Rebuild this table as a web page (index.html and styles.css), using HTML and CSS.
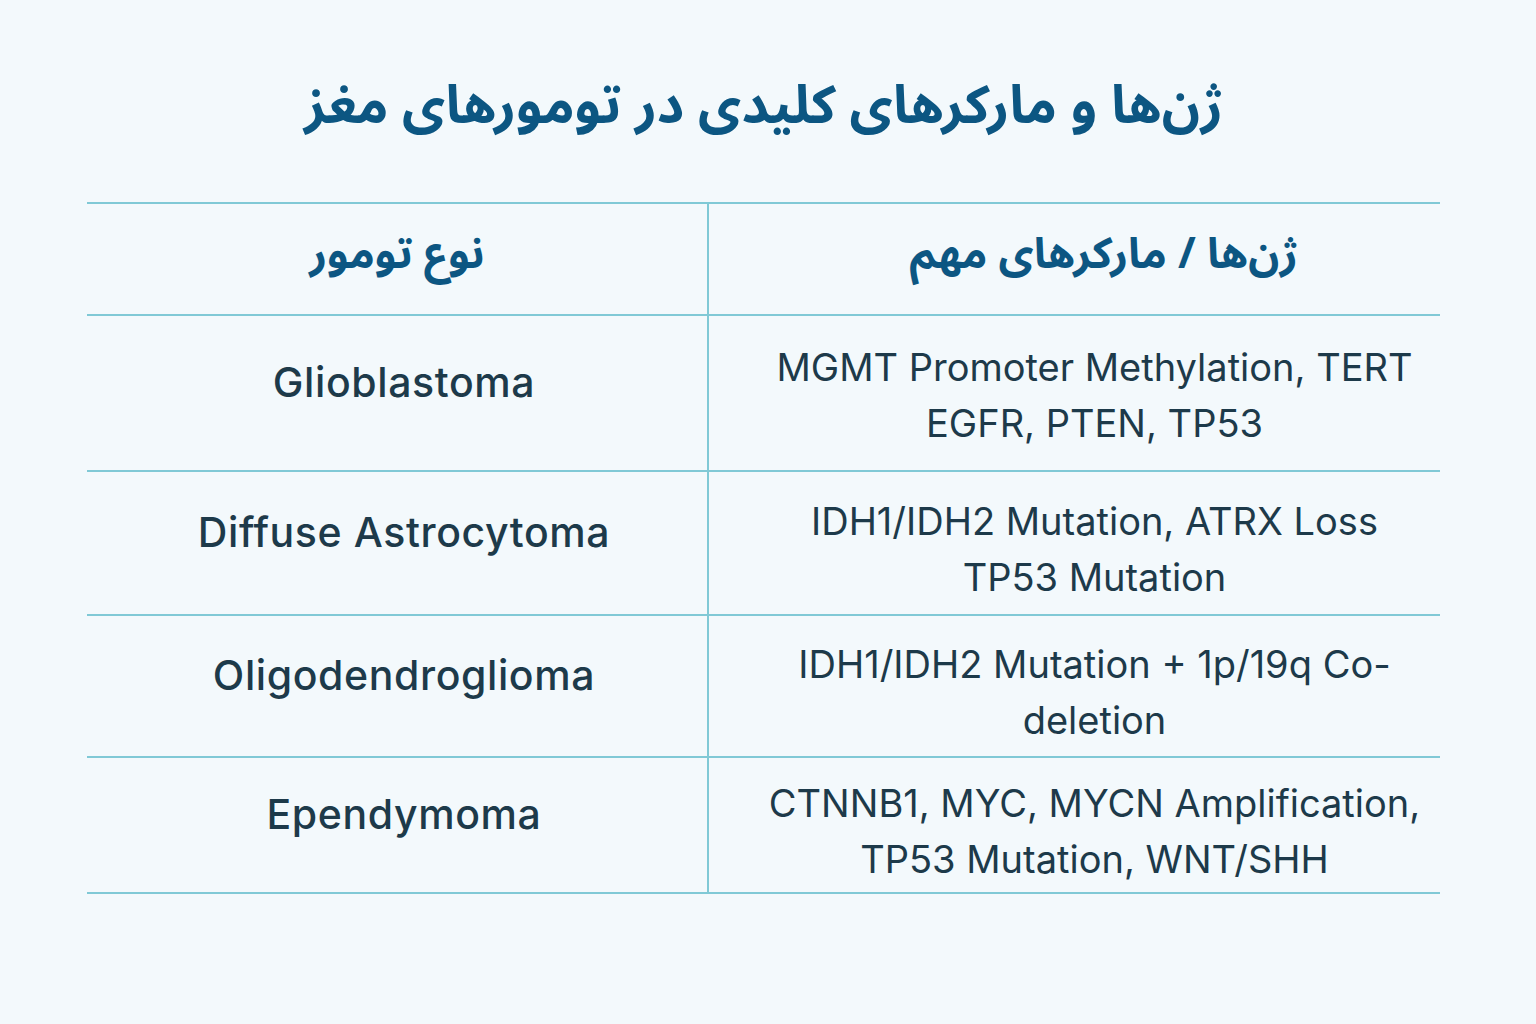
FILE: index.html
```html
<!DOCTYPE html>
<html lang="fa">
<head>
<meta charset="utf-8">
<title>ژن‌ها و مارکرهای کلیدی در تومورهای مغز</title>
<link rel="stylesheet" href="styles.css">
</head>
<body>
<main class="page">
  <h1 class="title" dir="rtl">ژن&zwnj;ها و مارکرهای کلیدی در تومورهای مغز</h1>
  <div class="table">
    <div class="row row-head">
      <div class="cell cell-left head" dir="rtl">نوع تومور</div>
      <div class="cell cell-right head head-right" dir="rtl">ژن&zwnj;ها / مارکرهای مهم</div>
    </div>
    <div class="row row-1">
      <div class="cell cell-left name">Glioblastoma</div>
      <div class="cell cell-right markers markers-first">MGMT Promoter Methylation, TERT<br>EGFR, PTEN, TP53</div>
    </div>
    <div class="row row-2">
      <div class="cell cell-left name">Diffuse Astrocytoma</div>
      <div class="cell cell-right markers">IDH1/IDH2 Mutation, ATRX Loss<br>TP53 Mutation</div>
    </div>
    <div class="row row-3">
      <div class="cell cell-left name">Oligodendroglioma</div>
      <div class="cell cell-right markers">IDH1/IDH2 Mutation + 1p/19q Co-<br>deletion</div>
    </div>
    <div class="row row-4">
      <div class="cell cell-left name">Ependymoma</div>
      <div class="cell cell-right markers">CTNNB1, MYC, MYCN Amplification,<br>TP53 Mutation, WNT/SHH</div>
    </div>
  </div>
</main>
</body>
</html>
```

FILE: styles.css
```css
html, body {
  margin: 0;
  padding: 0;
  background: #f3f9fc;
}

body {
  width: 1536px;
  height: 1024px;
  overflow: hidden;
  font-family: "Inter", "Noto Sans", "DejaVu Sans", sans-serif;
  color: #1d3a4a;
}

.page {
  display: flex;
  flex-direction: column;
  padding: 66px 96px 0 87px;
}

.title {
  margin: 0 0 56px;
  text-align: center;
  font-family: "Noto Sans Arabic", "DejaVu Sans", sans-serif;
  font-weight: 700;
  font-size: 53px;
  line-height: 80px;
  color: #0c5682;
}

.table {
  display: flex;
  flex-direction: column;
  border-bottom: 2px solid #80c9d6;
}

.row {
  display: grid;
  grid-template-columns: 620px 1fr;
  border-top: 2px solid #80c9d6;
}

.row-head { height: 110px; }
.row-1 { height: 154px; }
.row-2 { height: 142px; }
.row-3 { height: 140px; }
.row-4 { height: 134px; }

.cell {
  display: flex;
  align-items: center;
  justify-content: center;
  text-align: center;
  white-space: nowrap;
}

.cell-right {
  border-left: 2px solid #80c9d6;
}

.head {
  font-family: "Noto Sans Arabic", "DejaVu Sans", sans-serif;
  font-weight: 700;
  font-size: 43px;
  line-height: 56px;
  color: #0c5682;
  padding-bottom: 8px;
}

.head-right {
  padding-left: 58px;
}

.name {
  font-weight: 500;
  font-size: 41px;
  letter-spacing: 0.6px;
  line-height: 56px;
  padding-bottom: 22px;
  padding-left: 14px;
}

.markers {
  font-weight: 400;
  font-size: 38px;
  line-height: 56px;
  padding-top: 11px;
  padding-left: 40px;
}

.markers-first {
  padding-top: 3px;
}
```
